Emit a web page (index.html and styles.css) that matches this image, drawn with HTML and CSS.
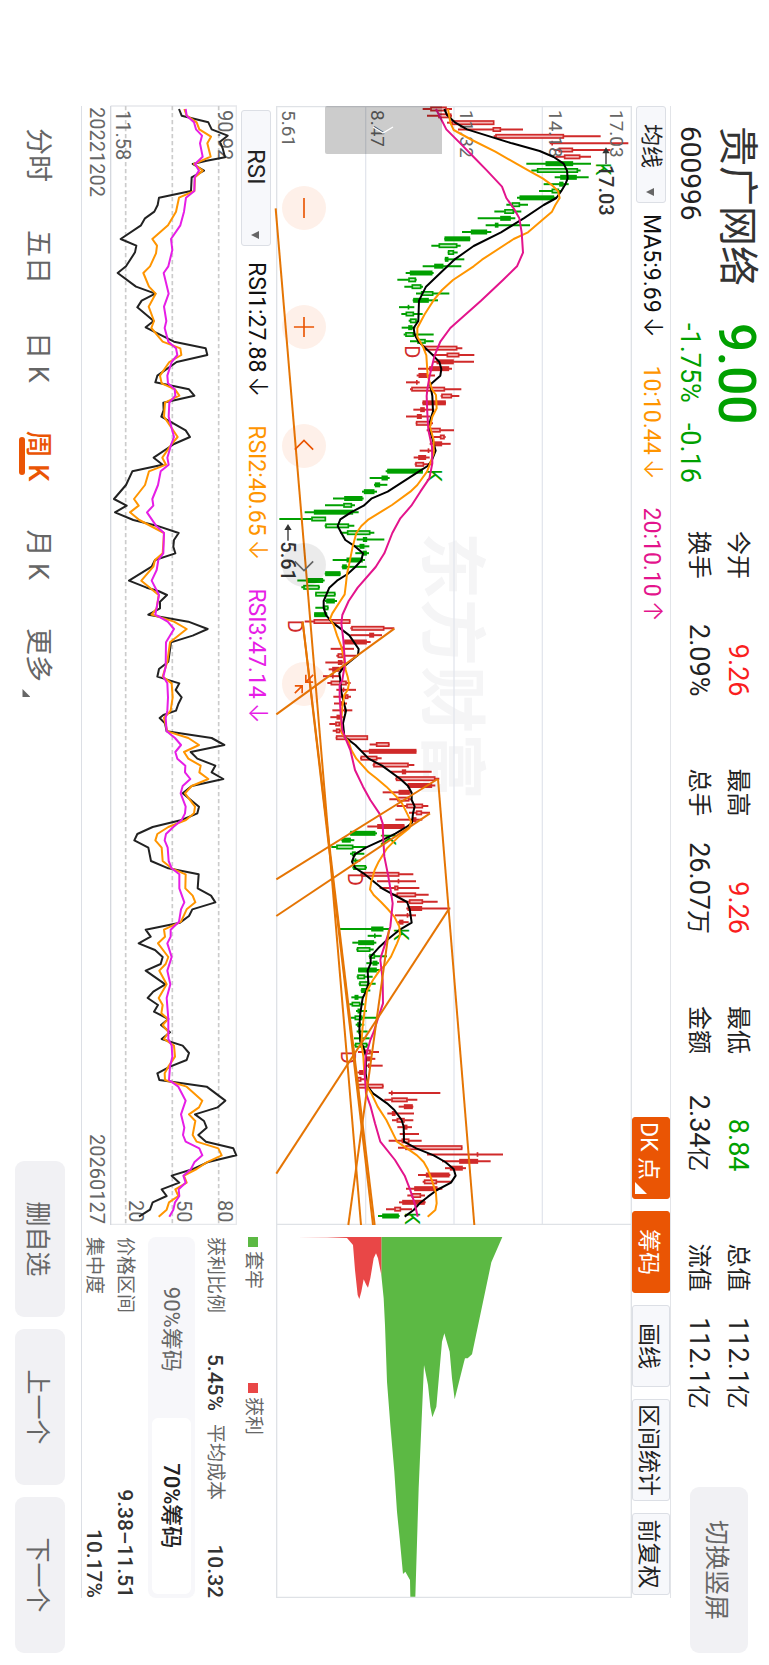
FILE: index.html
```html
<!DOCTYPE html>
<html lang="zh-CN">
<head>
<meta charset="utf-8">
<meta name="viewport" content="width=device-width, initial-scale=1">
<title>贵广网络 600996</title>
<link rel="stylesheet" href="styles.css">
</head>
<body>
<div class="screen">
  <header class="quote">
    <div class="identity">
      <h1 class="name">贵广网络</h1>
      <span class="price">9.00</span>
      <span class="code">600996</span>
      <span class="change"><span>-1.75%</span><span>-0.16</span></span>
    </div>
    <dl class="stats">
      <div class="stat"><dt>今开</dt><dd class="up">9.26</dd></div>
      <div class="stat"><dt>最高</dt><dd class="up">9.26</dd></div>
      <div class="stat"><dt>最低</dt><dd class="down">8.84</dd></div>
      <div class="stat"><dt>总值</dt><dd>112.1<span class="unit">亿</span></dd></div>
      <div class="stat"><dt>换手</dt><dd>2.09%</dd></div>
      <div class="stat"><dt>总手</dt><dd>26.07<span class="unit">万</span></dd></div>
      <div class="stat"><dt>金额</dt><dd>2.34<span class="unit">亿</span></dd></div>
      <div class="stat"><dt>流值</dt><dd>112.1<span class="unit">亿</span></dd></div>
    </dl>
    <button class="soft-button orient" type="button">切换竖屏</button>
  </header>

  <main class="workspace">
    <div class="toolbar">
      <span class="picker picker-ma">
        <select aria-label="主图指标"><option>均线</option></select>
        <svg class="caret" viewBox="0 0 10 8" aria-hidden="true"><path d="M1 0h8L5 8z"/></svg>
      </span>
      <div class="readings">
        <span class="black">MA5:9.69<span class="arrow">↓</span></span>
        <span class="orange">10:10.44<span class="arrow">↓</span></span>
        <span class="magenta">20:10.10<span class="arrow">↑</span></span>
      </div>
      <div class="tools">
        <button class="tool active corner" type="button">DK 点</button>
        <button class="tool active" type="button">筹码</button>
        <button class="tool" type="button">画线</button>
        <button class="tool wide" type="button">区间统计</button>
        <button class="tool" type="button">前复权</button>
      </div>
    </div>

    <div class="panels">
      <section class="charts">
        <div class="kline">
          <svg id="kline" class="plot" viewBox="48 0 3357 1068" role="img" aria-label="周K线图"></svg>
          <button class="handle" type="button" aria-label="展开">
            <svg viewBox="0 0 8 22" aria-hidden="true"><path d="M1 1l6 10-6 10"/></svg>
          </button>
          <div class="zoomers">
            <button type="button" aria-label="缩小"><svg viewBox="0 0 24 24" aria-hidden="true"><path d="M1 12h22"/></svg></button>
            <button type="button" aria-label="放大"><svg viewBox="0 0 24 24" aria-hidden="true"><path d="M1 12h22M12 1v22"/></svg></button>
            <button type="button" aria-label="左移"><svg viewBox="0 0 24 24" aria-hidden="true"><path d="M16 2L6 12l10 10"/></svg></button>
            <button class="disabled" type="button" aria-label="右移"><svg viewBox="0 0 24 24" aria-hidden="true"><path d="M8 2l10 10L8 22"/></svg></button>
            <button type="button" aria-label="收起"><svg viewBox="0 0 24 24" aria-hidden="true"><path d="M2 10h8V2M2 2l8 8M22 14h-8v8M22 22l-8-8"/></svg></button>
          </div>
        </div>
        <div class="rsi-bar">
          <span class="picker picker-rsi">
            <select aria-label="副图指标"><option>RSI</option></select>
            <svg class="caret" viewBox="0 0 10 8" aria-hidden="true"><path d="M1 0h8L5 8z"/></svg>
          </span>
          <div class="readings">
            <span class="black">RSI1:27.88<span class="arrow">↓</span></span>
            <span class="orange">RSI2:40.65<span class="arrow">↓</span></span>
            <span class="violet">RSI3:47.14<span class="arrow">↓</span></span>
          </div>
        </div>
        <svg id="rsi" class="plot" viewBox="48 0 3357 381" role="img" aria-label="RSI 指标图"></svg>
        <div class="dates"><span>20221202</span><span>20260127</span></div>
      </section>

      <aside class="chips">
        <svg id="chips" class="plot" viewBox="0 0 1119 1068" role="img" aria-label="筹码分布"></svg>
        <div class="chip-info">
          <div class="legend">
            <span class="key key-loss">套牢</span>
            <span class="key key-gain">获利</span>
          </div>
          <div class="facts">
            <div class="fact"><span>获利比例</span><b>5.45%</b></div>
            <div class="fact"><span>平均成本</span><b>10.32</b></div>
          </div>
          <div class="segments">
            <button type="button">90%筹码</button>
            <button class="selected" type="button">70%筹码</button>
          </div>
          <div class="details">
            <div class="fact"><span>价格区间</span><b>9.38–11.51</b></div>
            <div class="fact"><span>集中度</span><b>10.17%</b></div>
          </div>
        </div>
      </aside>
    </div>
  </main>

  <footer class="bottom">
    <nav class="periods">
      <button type="button">分时</button>
      <button type="button">五日</button>
      <button type="button">日 K</button>
      <button class="current" type="button">周 K</button>
      <button type="button">月 K</button>
      <button class="more" type="button">更多</button>
    </nav>
    <div class="actions">
      <button class="soft-button" type="button">删自选</button>
      <button class="soft-button" type="button">上一个</button>
      <button class="soft-button" type="button">下一个</button>
    </div>
  </footer>
</div>
<script src="app.js"></script>
</body>
</html>
```

FILE: styles.css
```css
* { box-sizing: border-box; }

html, body { margin: 0; height: 100%; background: #fff; }

body {
  position: relative;
  overflow: hidden;
  font-family: Roboto, "Noto Sans CJK SC", sans-serif;
  color: #222;
}

button, select {
  font: inherit;
  color: inherit;
  border: 0;
  margin: 0;
  padding: 0;
  background: none;
}

h1, dl, dd { margin: 0; font-weight: 400; }

/* Landscape screen shown on a portrait display. */
.screen {
  position: absolute;
  top: 0;
  left: 0;
  width: 100vh;
  height: 100vw;
  transform-origin: 0 0;
  transform: rotate(90deg) translateY(-100%);
  display: flex;
  flex-direction: column;
}

.black { color: #111; }
.orange { color: #ff9500; }
.magenta { color: #e3148c; }
.violet { color: #e61ee6; }
.up { color: #fa1e1e; }
.down { color: #00a000; }

.soft-button {
  width: 156px;
  height: 50px;
  border-radius: 9px;
  background: #f1f1f4;
  color: #666;
  font-size: 25px;
}

/* Header */
.quote {
  display: flex;
  height: 98px;
  padding: 0 12px 0 126px;
}

.identity {
  display: grid;
  grid-template-columns: 197px 208px;
  grid-template-rows: 52px 32px;
  row-gap: 5px;
  padding-top: 6px;
}

.name { font-size: 40px; line-height: 52px; color: #333; }
.price { font-size: 51px; line-height: 54px; font-weight: 500; color: #00a000; }
.code { font-size: 28px; line-height: 32px; }
.change { display: flex; gap: 20px; font-size: 27px; line-height: 32px; color: #00a000; }

.stats {
  flex: 1;
  display: grid;
  grid-template-columns: repeat(4, 1fr);
  grid-auto-rows: 39px;
  column-gap: 72px;
  padding-top: 12px;
}

.stat { display: flex; justify-content: space-between; line-height: 39px; }
.stat dt, .unit { font-size: 24px; }
.stat dd { font-size: 27px; white-space: nowrap; }

.orient { width: 166px; height: 58px; margin: 21px 0 0 78px; }

/* Chart area */
.workspace { margin: 0 67px 0 106px; border-top: 1px solid #e2e4e8; }

.toolbar, .rsi-bar { display: flex; align-items: center; font-size: 23px; }
.toolbar { height: 38px; }
.rsi-bar { height: 39px; padding-left: 4px; }

.picker {
  position: relative;
  height: 30px;
  border: 1px solid #dcdfe5;
  border-radius: 3px;
  background: #f7f8fb;
}

.picker select { width: 100%; height: 100%; appearance: none; font-size: 22px; line-height: 28px; }
.picker-ma { width: 97px; }
.picker-ma select { padding-left: 17px; }
.picker-rsi { width: 136px; }
.picker-rsi select { padding-left: 38px; font-size: 24px; }
.caret { position: absolute; right: 5px; top: 11px; width: 10px; height: 8px; fill: #666; }

.readings { display: flex; white-space: nowrap; line-height: 30px; }
.toolbar .readings { gap: 28px; margin-left: 11px; }
.rsi-bar .readings { gap: 28px; margin-left: 16px; }
.arrow { font-family: Inter, sans-serif; font-size: 25px; font-weight: 300; line-height: 1; margin-left: 4px; }

.tools { display: flex; gap: 12px; margin-left: auto; padding-right: 3px; }

.tool {
  position: relative;
  width: 82px;
  height: 38px;
  border: 1px solid #dcdfe5;
  border-radius: 3px;
  background: #f7f8fb;
  font-size: 23px;
}

.tool.wide { width: 102px; }
.tool.active { background: #ea5504; border-color: #ea5504; color: #fff; }
.tool.corner { padding-right: 14px; white-space: nowrap; }

.tool.corner::after, .more::after {
  content: "";
  position: absolute;
  background: currentColor;
  clip-path: polygon(100% 0, 100% 100%, 0 100%);
}

.tool.corner::after { right: 4px; bottom: 2px; width: 12px; height: 12px; }

.panels {
  display: grid;
  grid-template-columns: 3fr 1fr;
  border-bottom: 1px solid #dcdfe5;
}

.charts, .chips { min-width: 0; }
.plot { display: block; width: 100%; height: auto; overflow: visible; }
.kline { position: relative; }

.handle {
  position: absolute;
  left: 0;
  top: 190px;
  width: 48px;
  height: 117px;
  border-radius: 0 0 2px 2px;
  background: rgba(0, 0, 0, 0.2);
}

.handle svg { display: block; width: 8px; height: 22px; margin: 0 auto; fill: none; stroke: #fff; stroke-width: 1.4; }

.zoomers { position: absolute; left: 80px; bottom: 6px; display: flex; gap: 75px; }

.zoomers button {
  display: grid;
  place-items: center;
  width: 44px;
  height: 44px;
  border-radius: 50%;
  background: rgba(240, 90, 10, 0.09);
  color: #ea5504;
}

.zoomers .disabled { background: rgba(0, 0, 0, 0.08); color: #666; }
.zoomers svg { width: 22px; height: 22px; fill: none; stroke: currentColor; stroke-width: 1.8; }

.dates {
  display: flex;
  justify-content: space-between;
  padding: 0 1px;
  font-size: 20px;
  line-height: 27px;
  color: #666;
}

/* Chip distribution */
.chip-info {
  display: flex;
  flex-direction: column;
  padding: 11px 0 0 12px;
  font-size: 19px;
  line-height: 24px;
  color: #666;
}

.legend { display: flex; }
.key { display: flex; align-items: center; gap: 4px; width: 146px; }
.key::before { content: ""; width: 10px; height: 10px; }
.key-loss::before { background: #5cb944; }
.key-gain::before { background: #e94747; }

.facts { display: grid; grid-template-columns: 1fr 1fr; gap: 13px; margin: 14px 0 8px; }
.fact { display: flex; justify-content: space-between; white-space: nowrap; }
.fact b { font-size: 21px; font-weight: 500; color: #333; }
.details { display: grid; gap: 7px; margin-top: 11px; }

.segments {
  display: flex;
  height: 47px;
  padding: 4px;
  border-radius: 8px;
  background: #f7f7fa;
  font-size: 22px;
}

.segments button { flex: 1; border-radius: 6px; }
.segments .selected { background: #fff; color: #222; font-weight: 500; }

/* Bottom bar */
.bottom {
  flex: 1;
  display: flex;
  align-items: center;
  justify-content: space-between;
  padding: 0 12px 0 128px;
}

.periods { display: flex; gap: 48px; margin-top: 4px; font-size: 27px; line-height: 42px; color: #666; }
.periods button { position: relative; white-space: nowrap; }
.periods .current { color: #ea5504; font-weight: 500; }

.current::after {
  content: "";
  position: absolute;
  left: 6px;
  right: 6px;
  bottom: 2px;
  height: 6px;
  border-radius: 3px;
  background: #ea5504;
}

.more::after { right: -15px; bottom: 5px; width: 8px; height: 8px; }
.actions { display: flex; gap: 12px; }
```

FILE: app.js
```js
const NS = "http://www.w3.org/2000/svg";
const STEP = 20.5;
const START = 57;

function add(parent, tag, attrs, text) {
  const node = document.createElementNS(NS, tag);
  for (const key in attrs) node.setAttribute(key, attrs[key]);
  if (text) node.textContent = text;
  parent.appendChild(node);
  return node;
}

/* Each series is a list of blocks [offset, "x,value x,value ..."]. */
function polyline(svg, blocks, top, color, width) {
  const points = blocks.map(([offset, text]) => text.trim().split(/\s+/).map(pair => {
    const [x, value] = pair.split(",").map(Number);
    return (x + offset) + "," + (top - value);
  }).join(" ")).join(" ");
  add(svg, "polyline", { points, fill: "none", stroke: color, "stroke-width": width, "stroke-linejoin": "round" });
}

function label(svg, text, x, y, size, color, extra) {
  add(svg, "text", Object.assign({ x, y, "font-size": size, fill: color }, extra), text);
}

/* ---- K line ---- */
const kline = document.getElementById("kline");
const TOP = 1115;

/* low, body low, body high, high, kind: h hollow, s solid, c cross */
const candles = `
R 487,511,558,575,h 500,535,572,575,h 560,575,701,701,h 593,698,721,788,h 700,706,910,1021,h 868,872,878,1104,c 880,896,937,1050,h 885,912,959,992,h
G 798,857,937,992,s 813,831,952,961,h 883,901,948,985,s 850,898,908,925,s 836,875,895,905,h 770,779,880,888,s 738,755,778,803,h 702,733,760,783,h
652,721,750,765,s 676,705,713,809,s 605,633,679,693,s 552,554,628,630,s 513,536,590,601,h 562,564,580,592,h 553,555,563,612,s 487,523,548,603,s
436,450,515,520,s 411,445,466,469,h 432,455,482,488,h 467,483,518,567,h 457,460,504,533,s 416,443,447,462,c 423,437,460,487,h 445,450,468,472,h
424,445,455,465,s 430,436,460,520,h 449,472,495,520,h
R 490,492,590,606,h 515,560,596,642,h 520,530,579,641,s 473,508,565,575,s 469,476,500,524,s 437,466,472,478,c 449,454,553,603,h 541,544,574,597,h
486,488,555,557,s 459,481,492,522,s 437,471,483,510,s 466,468,512,518,h 499,505,540,581,h 520,540,552,556,h 508,522,544,571,s 478,502,507,517,c
460,475,496,508,s 463,466,490,515,h
G 376,382,486,488,s 328,365,381,388,s 341,345,358,381,s 305,312,341,350,s 218,253,305,310,s 194,250,274,284,h 133,162,277,295,s 57,154,196,197,h
193,196,265,282,h 240,261,329,342,h 289,309,319,372,s 283,299,311,327,s 285,308,318,326,s 217,260,306,314,s 244,247,258,319,s 193,196,239,241,s
111,142,187,193,s 123,130,176,179,h 164,166,224,226,h 194,199,222,230,s 165,192,203,205,h 161,163,199,201,s
R 133,161,269,270,h 270,274,371,402,h 270,328,340,365,s 250,253,318,331,s 211,244,250,281,c 228,233,247,292,h 195,234,245,254,s 205,217,236,256,s
188,214,220,238,c 201,212,258,271,h 228,246,252,287,c 219,255,263,272,h 221,238,245,260,c 216,250,256,276,c 210,230,243,250,s 207,226,238,245,h
217,228,239,245,h 226,228,322,323,h 328,348,386,388,h 305,327,467,468,s 299,302,350,364,h 337,340,444,462,h 392,426,436,514,s 405,408,524,537,h
440,443,514,525,s 367,416,447,455,s 387,412,446,452,h 409,439,487,504,h 446,468,484,509,h 405,457,467,486,s 321,352,431,433,s
G 268,271,344,350,s 243,246,270,282,s 213,229,278,318,h 269,276,285,312,h 275,280,288,300,c 276,280,316,320,h
R 300,304,416,459,h 350,411,417,467,c 358,403,413,477,h 390,410,466,505,h 410,447,487,532,h 438,443,484,570,s 404,438,444,467,c 413,418,428,445,s
G 238,334,368,386,s 322,340,346,364,c 276,295,340,348,s 288,291,329,340,h 325,328,343,380,h 318,338,350,356,s 293,295,348,360,s 289,292,313,337,h
295,298,325,346,h 301,304,318,330,s 273,284,293,310,s 267,275,299,312,h 287,293,299,320,s 272,284,305,350,h 286,292,300,312,s 289,294,299,322,c
281,296,302,328,c 282,285,320,323,h
R 293,315,330,356,h 318,320,330,345,s 318,322,328,367,c 291,298,309,315,s 285,291,302,312,h 290,293,368,370,h 385,390,397,540,c 372,394,441,471,h
415,432,456,459,s 381,396,404,461,s 395,410,432,459,h 411,430,440,455,s 418,429,434,476,c 385,425,446,484,h 413,436,605,606,h 500,649,654,728,c
545,598,652,691,s 554,570,606,617,s 473,498,566,570,s 487,492,529,575,h 437,463,530,546,s 441,455,481,494,h 416,427,492,496,s 377,403,421,455,h
G 353,367,414,418,s`;

label(kline, "东方财富", 1326, 612, 201, "#f5f5f6", { "font-weight": 700 });

for (const y of [269, 534, 799]) add(kline, "path", { d: `M48 ${y}H3405`, stroke: "#e3e6ed", "stroke-width": 4 });
add(kline, "path", { d: "M3405 2H50V1066H3405M3403 2V1066", fill: "none", stroke: "#dfe2e6", "stroke-width": 4 });

let tone = "R";
let index = 0;
const palette = { R: ["#d02a2a", "#f3b5b5"], G: ["#00a000", "#b5e6b5"] };
for (const token of candles.trim().split(/\s+/)) {
  if (token === "R" || token === "G") { tone = token; continue; }
  const [low, from, to, high, kind] = token.split(",");
  const x = START + STEP * index++;
  const [dark, pale] = palette[tone];
  if (kind === "h") {
    add(kline, "path", { d: `M${x} ${TOP - low}V${TOP - from}M${x} ${TOP - to}V${TOP - high}`, stroke: dark, "stroke-width": 6 });
  } else {
    add(kline, "path", { d: `M${x} ${TOP - low}V${TOP - high}`, stroke: dark, "stroke-width": 6 });
  }
  if (kind !== "c") {
    add(kline, "rect", { x: x - 5, y: TOP - to + 1, width: 10, height: Math.max(to - from - 2, 3), fill: kind === "h" ? pale : dark, stroke: dark, "stroke-width": 5 });
  } else {
    add(kline, "rect", { x: x - 7, y: TOP - to, width: 14, height: 5, fill: dark });
  }
}

/* Price axis */
[["17.03", 65], ["14.18", 250], ["11.32", 515], ["8.47", 782], ["5.61", 1049]]
  .forEach(([text, y]) => label(kline, text, 60, y, 57, "#666"));

/* K and D markers */
[["K", 218, 1006], ["K", 1138, 500], ["K", 2229, 363], ["K", 2514, 401], ["K", 3366, 434]].forEach(([t, x, v]) => label(kline, t, x, TOP - v, 60, "#00a000"));
[["D", 766, 433], ["D", 1589, 82], ["D", 2348, 262], ["D", 2882, 243]].forEach(([t, x, v]) => label(kline, t, x, TOP - v, 60, "#d02a2a"));

polyline(kline, [
  [0, "57,552 75,560 98,585 118,620 160,755 183,838 201,880 221,910 242,920 265,922 283,915 303,903 324,888 345,850 385,790 427,722 468,640 509,582 549,540 590,497 632,476 693,474 714,460 734,463 755,475 796,518 816,537 837,543 857,540 878,516"],
  [870, "15,510 48,516 95,518 120,510 150,508 172,515 212,526 240,515 258,502 275,475 335,382 356,333 377,310 397,272 418,240 438,232 459,243 480,255 500,285 520,308 541,303 561,285 582,262 602,230 623,207 663,190 684,190 705,197 725,213 766,267 807,295 825,293 860,250 880,237"],
  [1740, "30,240 60,242 80,246 122,257 160,248 200,252 225,285 266,325 287,365 327,420 348,443 368,454 390,454 409,463 430,458 458,455 470,440 491,405 512,362 532,318 553,283 575,275 594,285 614,315 655,365 696,440 717,448 758,454 778,420 810,380 830,358 860,331 880,331"],
  [2610, "31,322 70,324 93,318 114,307 160,300 200,297 245,300 260,309 290,317 340,316 380,322 400,338 430,380 450,402 480,424 500,430 545,431 565,468 586,520 606,555 627,580 647,586 668,572 690,530 710,503 730,478 750,460 770,433"]
], TOP, "#000", 6);

polyline(kline, [
  [0, "57,563 98,570 120,580 150,635 185,705 221,768 242,805 265,847 283,872 303,893 324,898 345,885 365,875 385,852 427,803 447,760 509,665 529,640 570,578 600,545 632,519 673,493 714,471 740,471 770,488 796,498 857,502"],
  [870, "28,515 45,527 85,529 110,516 140,509 180,520 220,520 254,508 275,500 315,471 335,450 375,395 418,325 438,303 459,288 500,277 560,265 582,260 610,257 643,253 663,240 700,216 717,209 735,220 766,230 800,243 830,250 870,256"],
  [1740, "20,262 40,266 60,262 75,252 110,246 160,242 190,245 215,265 240,273 266,288 307,325 325,348 350,378 380,408 400,425 430,440 455,452 475,447 500,415 535,380 575,355 600,343 635,333 658,329 675,340 696,362 717,382 740,402 770,417 797,419 820,410 860,392 885,375"],
  [2610, "31,358 60,338 93,320 150,313 200,307 250,303 290,309 340,312 380,320 400,333 440,352 480,378 545,410 565,440 586,470 606,490 627,502 668,517 700,527 730,529 750,525 770,502"]
], TOP, "#ff9500", 6);

polyline(kline, [
  [0, "57,527 118,558 160,600 201,640 242,680 290,725 324,738 355,760 385,777 427,784 488,788 529,770 570,728 632,662 714,570 755,540 796,523 857,508 898,501"],
  [870, "48,499 100,501 150,504 200,515 250,516 295,507 335,480 377,453 415,420 459,396 520,372 561,346 623,292 663,265 705,246 730,243 780,249 850,254"],
  [1740, "30,246 45,238 80,238 130,241 180,246 204,255 240,270 300,284 350,308 390,330 430,357 460,367 510,369 560,372 614,383 655,390 700,397 740,393 770,390 820,375 860,362"],
  [2610, "0,360 60,367 130,368 175,353 216,340 240,330 290,316 340,313 400,317 440,331 490,344 545,360 600,404 647,433 688,449 730,463 770,472"]
], TOP, "#e3148c", 6);

/* Trend lines */
[
  "355,46 3405,302", "1595,127 3405,338", "1595,127 3405,343", "1616,402 1873,48", "2067,532 2368,48",
  "2170,509 2478,48", "2067,533 3405,642", "2458,565 3251,48", "2520,386 3405,264"
].forEach(line => polyline(kline, [[0, line]], TOP, "#e57504", 6));

/* Extremes */
label(kline, "17.03", 224, TOP - 1016, 60, "#333", { "font-weight": 500 });
label(kline, "5.61", 1354, TOP - 62, 60, "#333", { "font-weight": 500 });
for (const [x, value] of [[172, 1037], [1302, 83]]) {
  const y = TOP - value;
  add(kline, "path", { d: `M${x} ${y}l18 -11v22zM${x + 12} ${y - 2}h38v4h-38z`, fill: "#333" });
}

/* ---- RSI ---- */
const rsi = document.getElementById("rsi");
const RTOP = 711;

add(rsi, "path", { d: "M48 379V2H3403V379", fill: "none", stroke: "#e6e8eb", "stroke-width": 4 });
add(rsi, "path", { d: "M48 379H3405", stroke: "#d5d8de", "stroke-width": 4 });
for (const value of [377, 517, 656]) {
  add(rsi, "path", { d: `M48 ${RTOP - value}H3403`, stroke: "#ccc", "stroke-width": 5, "stroke-dasharray": "13 8" });
}
[["90.92", 60, 653], ["11.58", 60, 347], ["20", 3330, 388], ["50", 3330, 530], ["80", 3330, 653]]
  .forEach(([text, x, value]) => label(rsi, text, x, RTOP - value, 60, "#666"));

polyline(rsi, [
  [0, "57,537 77,545 97,625 118,635 137,683 155,660 175,668 202,675 212,620 222,578 242,612 262,575 303,573 323,477 345,473 365,463 385,435 406,423 447,362 467,409 487,405 529,378 549,353 590,408 611,466 632,425 652,412 693,461 712,437 734,480 755,522 775,617 795,622 816,530 857,472 877,466 898,567 917,583 938,490 960,491 980,484 1000,520 1021,557 1041,570 1062,522 1103,461 1124,488 1144,397"],
  [1170, "15,378 57,342 77,380 97,345 120,400 137,470 159,536 180,522 200,520 220,526 240,465 260,455 302,387 323,440 333,475 345,501 365,480 385,480 404,445 425,565 447,623 467,578 487,513 545,505 567,477 590,472 610,538 630,527 652,545 672,535 692,528 705,490 714,479 730,495 754,500 774,635 795,673 816,572 836,592 857,646 877,635 897,670 918,575 940,548 980,597 1000,592 1020,545 1041,458 1062,412 1081,403 1103,445 1143,453 1165,505"],
  [2340, "13,596 55,593 77,633 97,646 118,577 138,567 158,540 179,437 200,452 220,416 240,465 261,488 282,482 302,437 343,496 365,460 384,443 405,474 425,462 447,505 465,483 487,510 507,485 527,548 549,567 570,560 590,510 610,472 630,478 650,620 692,676 712,653 733,585 753,612 773,620 795,595 815,618 835,700 856,709 877,622 897,580 917,515 938,538 958,485 978,500 997,458 1019,450 1040,417"]
], RTOP, "#222", 6);

polyline(rsi, [
  [0, "57,553 77,560 97,590 118,598 140,633 160,622 200,632 222,582 242,608 262,585 303,583 323,537 365,528 406,504 447,457 467,471 490,468 529,450 549,430 590,447 611,467 650,446 693,462 714,454 755,488 775,541 795,544 816,508 857,480 880,485 898,525 917,538 938,495 980,492 1041,533 1062,515 1103,487 1124,498 1144,447"],
  [1170, "15,435 57,402 77,416 97,390 120,418 159,492 220,488 240,465 260,460 302,424 345,476 385,470 404,455 425,522 447,560 487,510 545,502 590,488 610,515 652,518 692,512 714,492 754,502 774,565 795,597 816,552 836,565 857,602 877,598 897,625 918,575 940,555 980,585 1000,582 1020,558 1041,505 1062,472 1081,466 1103,485 1143,488 1165,515"],
  [2340, "13,557 55,556 77,578 97,586 118,560 155,543 179,492 200,495 220,474 261,505 282,497 302,478 343,500 384,476 405,488 430,484 447,504 465,488 487,506 507,492 527,522 560,525 590,505 610,494 630,495 650,560 692,607 712,597 733,567 753,586 795,578 815,590 835,655 856,665 877,620 897,590 917,552 938,560 958,526 978,535 997,507 1019,500 1040,476"]
], RTOP, "#ff9500", 6);

polyline(rsi, [
  [0, "57,557 77,560 97,582 118,588 137,606 160,600 200,608 222,585 242,597 262,584 303,583 323,558 365,552 406,541 447,513 480,517 529,505 549,491 611,506 650,492 693,499 714,494 755,505 775,528 795,532 816,515 857,502 880,504 898,524 917,526 938,508 980,506 1041,522 1062,514 1103,502 1124,506 1144,482"],
  [1170, "15,474 57,457 77,460 97,441 137,468 159,492 220,490 240,475 270,470 302,455 345,477 404,466 425,503 447,522 487,498 560,497 590,490 610,502 652,504 692,502 714,497 754,500 774,525 795,543 816,526 836,532 857,556 877,555 897,571 918,548 940,542 980,557 1000,555 1020,545 1041,520 1062,498 1081,494 1103,503 1143,506 1165,515"],
  [2340, "13,538 55,538 97,553 118,543 155,537 179,512 200,512 220,502 261,515 302,502 343,511 384,500 447,505 507,505 527,515 560,517 590,510 630,507 650,535 692,557 733,543 773,553 795,549 815,557 835,598 856,607 877,583 897,573 917,550 938,557 958,536 978,538 997,525 1019,520 1040,508"]
], RTOP, "#e61ee6", 6);

/* ---- Chip distribution ---- */
const chips = document.getElementById("chips");
add(chips, "path", { d: "M0 2H1117V1066H0", fill: "none", stroke: "#dfe2e6", "stroke-width": 4 });

function area(text, color) {
  const points = text.split(" ").map(pair => {
    const [value, x] = pair.split(",").map(Number);
    return x + "," + (TOP - value);
  }).join(" ");
  add(chips, "polygon", { points, fill: color });
}

area("363,36 726,36 693,112 635,388 622,400 614,400 610,415 583,523 575,460 568,380 552,325 545,350 528,545 516,577 510,545 503,480 491,420 485,560 475,790 465,1115 450,1115 449,1065 435,1040 428,1047 418,940 410,860 402,740 390,600 380,470 374,300 370,220 363,150", "#5cb944");
area("110,36 200,37 260,39 278,60 284,135 292,210 297,222 303,200 310,163 318,180 323,188 330,160 340,100 347,85 353,100 358,125 363,150 363,36", "#e94747");
```
